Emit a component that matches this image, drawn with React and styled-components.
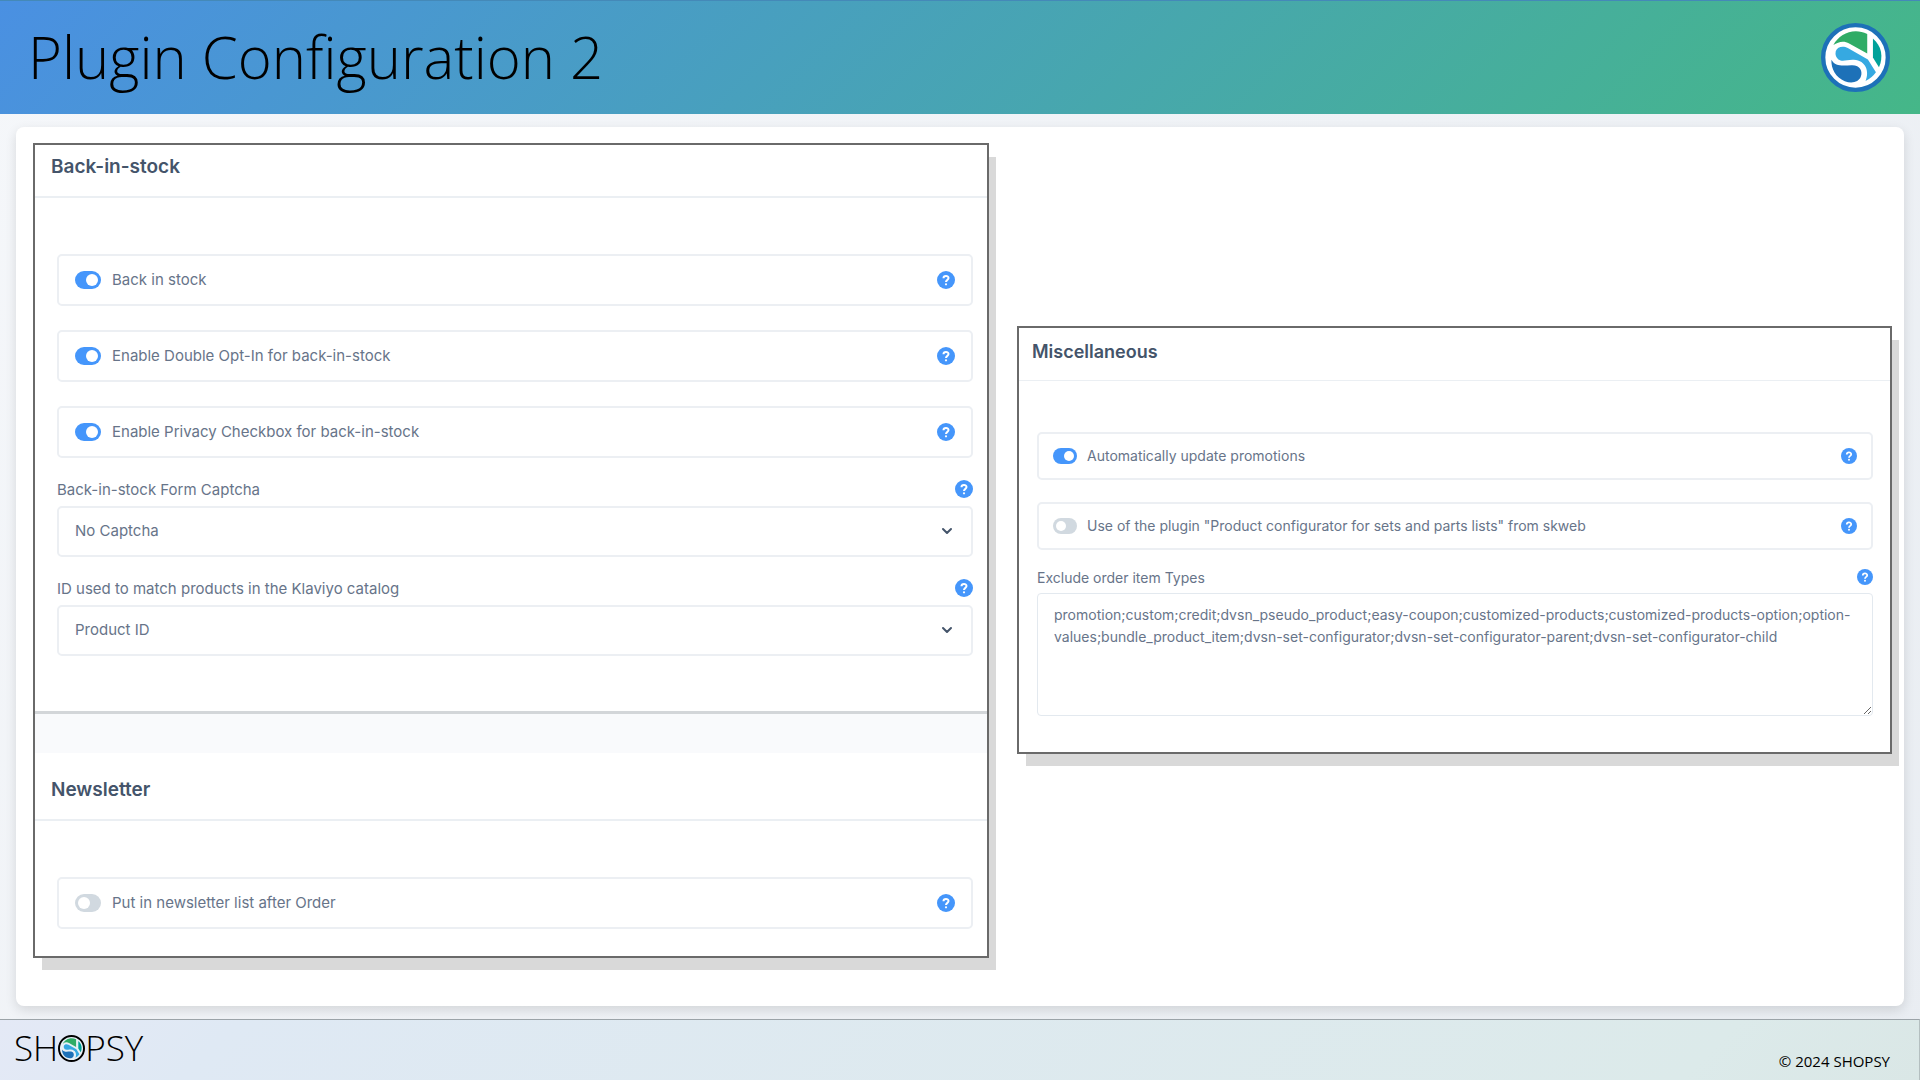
import React, { useState } from 'react';
import styled, { createGlobalStyle, css } from 'styled-components';

const GlobalStyle = createGlobalStyle`
  * {
    box-sizing: border-box;
  }

  body {
    margin: 0;
    font-family: Inter, 'Liberation Sans', sans-serif;
    color: #677489;
  }
`;

const Page = styled.div`
  min-height: 100vh;
  display: flex;
  flex-direction: column;
  background: linear-gradient(135deg, #f5f7fa 0%, #e9edf2 100%);
`;

const Header = styled.header`
  display: flex;
  align-items: center;
  justify-content: space-between;
  height: 114px;
  padding: 0 30px 0 28px;
  border-top: 1px solid #4489b8;
  background: linear-gradient(135deg, #4a90e2 0%, #45b788 100%);
`;

const PageTitle = styled.h1`
  margin: 0;
  padding-bottom: 2px;
  font-family: 'Open Sans', 'Noto Sans', sans-serif;
  font-size: 58px;
  font-weight: 300;
  line-height: 80px;
  color: #000;
`;

const Main = styled.main`
  flex: 1;
  display: flex;
  padding: 13px 16px;
`;

const Card = styled.div`
  flex: 1;
  display: grid;
  grid-template-columns: 956fr 875fr;
  gap: 28px;
  align-items: start;
  padding: 16px 12px 16px 17px;
  border-radius: 8px;
  background: #fff;
  box-shadow: 0 4px 12px rgba(0, 0, 0, 0.12);
`;

const regular = css`
  --text: 15px;
  --title: 19px;
  --title-pad: 2px 16px 9px;
  --rule: 2px;
  --left: 22px;
  --right: 14px;
  --top: 56px;
  --row: 52px;
  --gap: 24px;
  --pad: 17px;
  --toggle: 26px;
  --toggle-gap: 11px;
  --toggle-height: 18px;
  --knob: 12px;
  --help: 18px;
  --field-gap: 19px;
  --label-gap: 5px;
`;

const compact = css`
  --text: 14px;
  --title: 18px;
  --title-pad: 4px 13px 8px;
  --rule: 1px;
  --left: 18px;
  --right: 17px;
  --top: 51px;
  --row: 48px;
  --gap: 22px;
  --pad: 15px;
  --toggle: 24px;
  --toggle-gap: 10px;
  --toggle-height: 16px;
  --knob: 10px;
  --help: 16px;
  --field-gap: 15px;
  --label-gap: 4px;
`;

const Panel = styled.section`
  ${(props) => (props.$compact ? compact : regular)}
  margin-top: ${(props) => (props.$compact ? '183px' : '0')};
  border: 2px solid #6a6a6a;
  background: #fff;
  box-shadow: 8px 13px 0 -1px #d9d9d9;
  font-size: var(--text);
`;

const SectionTitle = styled.h2`
  margin: 0;
  padding: var(--title-pad);
  border-bottom: var(--rule) solid #ebeff3;
  font-size: var(--title);
  font-weight: 600;
  line-height: 40px;
  color: #44546a;
`;

const SectionBody = styled.div`
  padding: var(--top) var(--right) ${(props) => props.$bottom} var(--left);
`;

const Divider = styled.div`
  height: 42px;
  margin-bottom: 15px;
  border-top: 3px solid #d3d6d9;
  background: #f9fafc;
`;

const SwitchList = styled.div`
  display: flex;
  flex-direction: column;
  gap: var(--gap);
`;

const SwitchRow = styled.div`
  display: flex;
  align-items: center;
  height: var(--row);
  padding: 0 calc(var(--pad) - 1px) 1px;
  border: 2px solid #eceff3;
  border-radius: 5px;
`;

const SwitchLabel = styled.label`
  flex: 1;
  padding-bottom: 1px;
`;

const Toggle = styled.input`
  appearance: none;
  display: flex;
  align-items: center;
  width: var(--toggle);
  height: var(--toggle-height);
  margin: 0 var(--toggle-gap) 0 0;
  padding: 0 3px;
  border-radius: 9px;
  background: #d1d9e0;
  cursor: pointer;

  &::before {
    content: '';
    width: var(--knob);
    height: var(--knob);
    border-radius: 50%;
    background: #fff;
  }

  &:checked {
    justify-content: flex-end;
    background: #4596fb;
  }
`;

const HelpButton = styled.button`
  width: var(--help);
  height: var(--help);
  padding: 0;
  border: 0;
  border-radius: 50%;
  background: #4596fb;
  color: #fff;
  cursor: pointer;

  svg {
    display: block;
    width: 100%;
    height: 100%;
  }
`;

const Field = styled.div`
  margin-top: var(--field-gap);
`;

const FieldHead = styled.div`
  display: flex;
  align-items: center;
  justify-content: space-between;
  height: 24px;
  margin-bottom: var(--label-gap);
`;

const SelectBox = styled.div`
  position: relative;
`;

const Select = styled.select`
  appearance: none;
  display: block;
  width: 100%;
  height: 51px;
  padding: 0 calc(var(--pad) - 1px) 2px;
  border: 2px solid #eceff3;
  border-radius: 5px;
  background: #fff;
  color: inherit;
  font: inherit;
`;

const Chevron = styled.svg`
  position: absolute;
  top: 20px;
  right: 20px;
  width: 12px;
  height: 10px;
  pointer-events: none;
`;

const TextArea = styled.textarea`
  display: block;
  width: 100%;
  height: 123px;
  padding: 10px 16px;
  border: 1px solid #e3e9ef;
  border-radius: 4px;
  color: inherit;
  font: inherit;
  line-height: 22px;
  resize: vertical;
`;

const Footer = styled.footer`
  display: flex;
  justify-content: space-between;
  height: 61px;
  padding: 0 29px 0 14px;
  border-top: 1px solid #9ba3a8;
  border-right: 1px solid #b4bfc0;
  background: linear-gradient(135deg, #e4e9f6 0%, #dfe9f4 12%, #dceaea 88%, #dae7e6 100%);
  color: #000;
`;

const Brand = styled.div`
  display: flex;
  align-items: center;
  height: 56px;
  font-family: 'Open Sans', 'Noto Sans', sans-serif;
  font-size: 35px;
  font-weight: 300;
  line-height: 56px;
`;

const Copyright = styled.p`
  align-self: flex-end;
  margin: 0 0 8px;
  font-family: 'Open Sans', 'Noto Sans', sans-serif;
  font-size: 15px;
  line-height: 22px;
`;

const LogoMark = ({ size, ring, surface, ringWidth }) => (
  <svg width={size} height={size} viewBox="0 0 206 206" aria-hidden="true">
    <circle
      cx="103"
      cy="103"
      r={103 - ringWidth / 2}
      fill={surface}
      stroke={ring}
      strokeWidth={ringWidth}
    />
    <path d="M37 66C55 31 99 13 138 33V91L84 61C69 52 52 55 37 66Z" fill="#2fac66" />
    <path d="M155 46C181 68 187 101 173 132L155 103Z" fill="#00a19a" />
    <path
      d="M44 84C49 70 67 67 80 75L140 109L164 147Q152 164 133 173C145 147 135 112 98 110C76 109 65 117 52 109Q41 99 44 84Z"
      fill="#36a9e1"
    />
    <path
      d="M31 110C43 132 68 127 91 126C117 125 125 144 119 160C113 177 92 182 71 174C44 163 30 137 31 110Z"
      fill="#1d71b8"
    />
  </svg>
);

const Help = ({ topic }) => (
  <HelpButton type="button" aria-label={`Help: ${topic}`}>
    <svg viewBox="0 0 18 18" fill="none" stroke="currentColor" strokeWidth="2">
      <path d="M6.5 7.2C6.5 4.2 11.5 4.2 11.5 7.1C11.5 8.9 9 8.8 9 11" />
      <circle cx="9" cy="13.3" r="1.1" fill="currentColor" stroke="none" />
    </svg>
  </HelpButton>
);

const SwitchField = ({ id, label, defaultOn }) => {
  const [on, setOn] = useState(defaultOn);

  return (
    <SwitchRow>
      <Toggle
        id={id}
        type="checkbox"
        role="switch"
        checked={on}
        onChange={() => setOn(!on)}
      />
      <SwitchLabel htmlFor={id}>{label}</SwitchLabel>
      <Help topic={label} />
    </SwitchRow>
  );
};

const SelectField = ({ id, label, options }) => (
  <Field>
    <FieldHead>
      <label htmlFor={id}>{label}</label>
      <Help topic={label} />
    </FieldHead>
    <SelectBox>
      <Select id={id}>
        {options.map((option) => (
          <option key={option}>{option}</option>
        ))}
      </Select>
      <Chevron viewBox="0 0 12 10" fill="none" stroke="#44546a" strokeWidth="2">
        <path d="M2 3L6 7L10 3" strokeLinecap="round" strokeLinejoin="round" />
      </Chevron>
    </SelectBox>
  </Field>
);

const EXCLUDED_TYPES =
  'promotion;custom;credit;dvsn_pseudo_product;easy-coupon;customized-products;customized-products-option;option-values;bundle_product_item;dvsn-set-configurator;dvsn-set-configurator-parent;dvsn-set-configurator-child';

export default function App() {
  return (
    <Page>
      <GlobalStyle />
      <Header>
        <PageTitle>Plugin Configuration 2</PageTitle>
        <LogoMark size={69} ring="#1d71b8" surface="#fff" ringWidth={13} />
      </Header>

      <Main>
        <Card>
          <Panel>
            <SectionTitle>Back-in-stock</SectionTitle>
            <SectionBody $bottom="55px">
              <SwitchList>
                <SwitchField id="stock" label="Back in stock" defaultOn />
                <SwitchField
                  id="optin"
                  label="Enable Double Opt-In for back-in-stock"
                  defaultOn
                />
                <SwitchField
                  id="privacy"
                  label="Enable Privacy Checkbox for back-in-stock"
                  defaultOn
                />
              </SwitchList>
              <SelectField
                id="captcha"
                label="Back-in-stock Form Captcha"
                options={['No Captcha']}
              />
              <SelectField
                id="match"
                label="ID used to match products in the Klaviyo catalog"
                options={['Product ID']}
              />
            </SectionBody>
            <Divider />
            <SectionTitle>Newsletter</SectionTitle>
            <SectionBody $bottom="27px">
              <SwitchField
                id="newsletter"
                label="Put in newsletter list after Order"
                defaultOn={false}
              />
            </SectionBody>
          </Panel>

          <Panel $compact>
            <SectionTitle>Miscellaneous</SectionTitle>
            <SectionBody $bottom="36px">
              <SwitchList>
                <SwitchField
                  id="promotions"
                  label="Automatically update promotions"
                  defaultOn
                />
                <SwitchField
                  id="skweb"
                  label={'Use of the plugin "Product configurator for sets and parts lists" from skweb'}
                  defaultOn={false}
                />
              </SwitchList>
              <Field>
                <FieldHead>
                  <label htmlFor="excluded">Exclude order item Types</label>
                  <Help topic="Exclude order item Types" />
                </FieldHead>
                <TextArea id="excluded" spellCheck={false} defaultValue={EXCLUDED_TYPES} />
              </Field>
            </SectionBody>
          </Panel>
        </Card>
      </Main>

      <Footer>
        <Brand>
          <span>SH</span>
          <LogoMark size={27} ring="#000" surface="#e6f0f6" ringWidth={15} />
          <span>PSY</span>
        </Brand>
        <Copyright>© 2024 SHOPSY</Copyright>
      </Footer>
    </Page>
  );
}
